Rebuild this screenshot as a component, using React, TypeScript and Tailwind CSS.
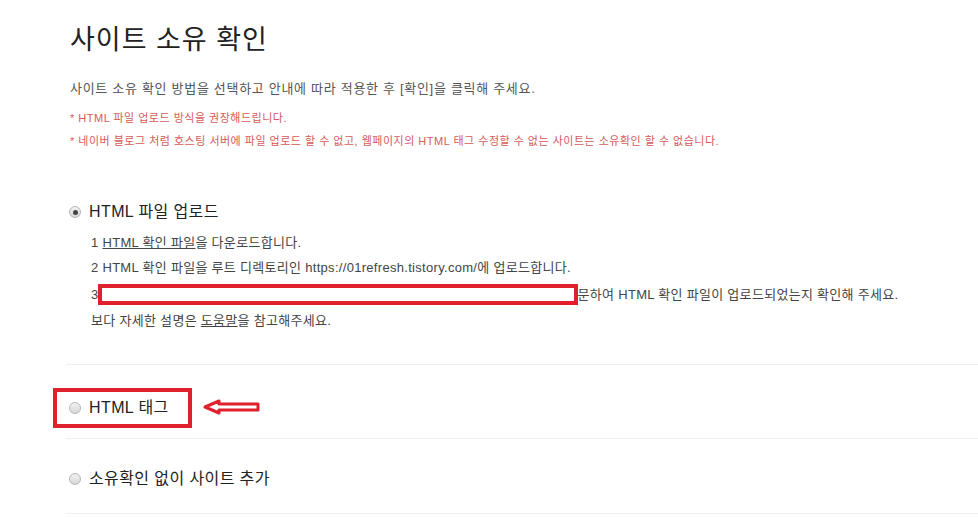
import React from "react";

const font = { fontFamily: '"Liberation Sans", Arial, "Noto Sans CJK KR", sans-serif' };

function Radio({ checked }: { checked?: boolean }) {
  return (
    <span className="relative inline-flex h-[12px] w-[12px] shrink-0 items-center justify-center rounded-full border border-[#b5b5b5] bg-gradient-to-b from-[#f2f2f2] to-[#d8d8d8]">
      {checked && <span className="h-[5px] w-[5px] rounded-full bg-[#444]" />}
    </span>
  );
}

export default function App() {
  return (
    <div className="relative h-[517px] w-[978px] overflow-hidden bg-white text-[#333]" style={font}>
      <div className="pl-[70px] pt-[22px]">
        <h1 className="text-[27px] leading-[36px] tracking-[1px] text-[#222]">사이트 소유 확인</h1>
        <p className="mt-[22px] text-[13px] leading-[18px] tracking-[0.7px] text-[#555]">
          사이트 소유 확인 방법을 선택하고 안내에 따라 적용한 후 [확인]을 클릭해 주세요.
        </p>
        <p className="mt-[13px] text-[11px] leading-[14px] tracking-[0.5px] text-[#d55a5a]">* HTML 파일 업로드 방식을 권장해드립니다.</p>
        <p className="mt-[9px] text-[11px] leading-[14px] tracking-[0.5px] text-[#d55a5a]">
          * 네이버 블로그 처럼 호스팅 서버에 파일 업로드 할 수 없고, 웹페이지의 HTML 태그 수정할 수 없는 사이트는 소유확인 할 수 없습니다.
        </p>
      </div>

      <div className="ml-[66px] mt-[54px]">
        <div className="border-b border-[#eeeeee] pb-[34px]">
          <div className="flex items-center gap-[8px] pl-[3px]">
            <Radio checked />
            <span className="text-[16px] leading-[20px] tracking-[0.4px] text-[#222]">HTML 파일 업로드</span>
          </div>
          <div className="mt-[12px] flex flex-col gap-[7px] pl-[25px] text-[13px] leading-[18px] tracking-[0.3px] text-[#444]">
            <div>
              1 <span className="underline">HTML 확인 파일</span>을 다운로드합니다.
            </div>
            <div>2 HTML 확인 파일을 루트 디렉토리인 https://01refresh.tistory.com/에 업로드합니다.</div>
            <div className="flex items-center">
              <span>3</span>
              <span className="ml-[-1px] inline-block h-[21px] w-[480px] border-[4px] border-[#e0202d] bg-white" />
              <span>문하여 HTML 확인 파일이 업로드되었는지 확인해 주세요.</span>
            </div>
            <div>
              보다 자세한 설명은 <span className="underline">도움말</span>을 참고해주세요.
            </div>
          </div>
        </div>

        <div className="flex h-[74px] items-start border-b border-[#eeeeee] pt-[23px]">
          <div className="-ml-[13px] flex h-[40px] w-[139px] items-center gap-[8px] border-[4px] border-[#e0202d] pl-[12px]">
            <Radio />
            <span className="text-[16px] leading-[20px] tracking-[0.4px] text-[#222]">HTML 태그</span>
          </div>
          <svg className="ml-[11px] mt-[11px]" width="58" height="16" viewBox="0 0 58 16">
            <path
              d="M2 8 L16 2 L16 5 L55 5 L55 11 L16 11 L16 14 Z"
              fill="#fff"
              stroke="#e0202d"
              strokeWidth="3"
              strokeLinejoin="round"
            />
          </svg>
        </div>

        <div className="h-[75px] border-b border-[#eeeeee] pl-[3px] pt-[30px]">
          <div className="flex items-center gap-[8px]">
            <Radio />
            <span className="text-[16px] leading-[20px] tracking-[0.4px] text-[#222]">소유확인 없이 사이트 추가</span>
          </div>
        </div>
      </div>
    </div>
  );
}
